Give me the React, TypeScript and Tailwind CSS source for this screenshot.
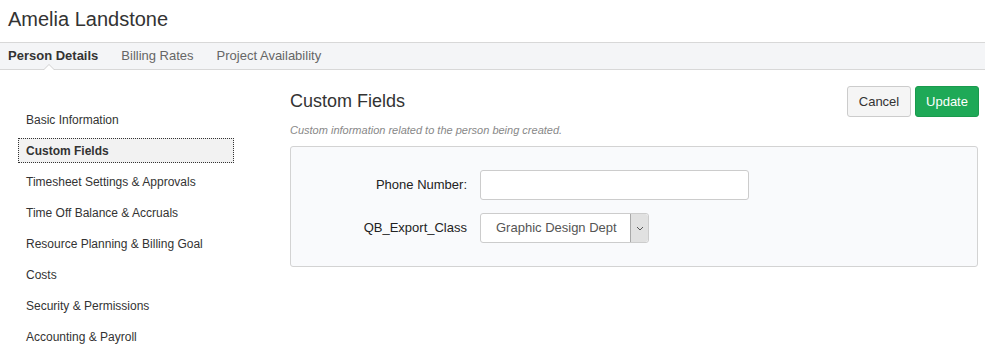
import React from "react";

const items = [
  "Basic Information",
  "Custom Fields",
  "Timesheet Settings & Approvals",
  "Time Off Balance & Accruals",
  "Resource Planning & Billing Goal",
  "Costs",
  "Security & Permissions",
  "Accounting & Payroll",
];

export default function App() {
  return (
    <div
      className="w-[985px] h-[360px] bg-white overflow-hidden text-[#333]"
      style={{ fontFamily: '"Liberation Sans", Arial, sans-serif' }}
    >
      <div className="h-[42px] flex items-center pl-[8px]">
        <h1 className="text-[20px] leading-none text-[#333] mt-[-4px]">Amelia Landstone</h1>
      </div>
      <div className="relative h-[28px] bg-[#f4f5f7] border-y border-[#d8d8d8] flex items-center pl-[8px] text-[13px]">
        <span className="font-bold text-[#333]">Person Details</span>
        <span className="ml-[23px] text-[#666]">Billing Rates</span>
        <span className="ml-[23px] text-[#666]">Project Availability</span>
        <div className="absolute left-[43px] bottom-[-1px] w-0 h-0 border-x-[6px] border-x-transparent border-b-[6px] border-b-[#d0d0d0]" />
        <div className="absolute left-[44px] bottom-[-1px] w-0 h-0 border-x-[5px] border-x-transparent border-b-[5px] border-b-white" />
      </div>
      <div className="flex">
        <div className="w-[290px] pl-[18px] pt-[37px] flex flex-col gap-[6px]">
          {items.map((it, i) => (
            <div
              key={it}
              className={
                i === 1
                  ? "w-[216px] h-[25px] flex items-center pl-[7px] text-[12px] font-bold bg-[#f2f2f2] border border-dotted border-[#333]"
                  : "w-[216px] h-[25px] flex items-center pl-[7px] text-[12px] text-[#333] border border-transparent"
              }
            >
              {it}
            </div>
          ))}
        </div>
        <div className="w-[688px] pt-[16px]">
          <div className="flex items-center justify-between h-[31px]">
            <h2 className="text-[18px] text-[#333]">Custom Fields</h2>
            <div className="flex gap-[4px] mr-[-1px]">
              <button className="w-[64px] h-[31px] rounded-[3px] border border-[#cccccc] bg-[#f5f5f5] text-[13px] text-[#333]">
                Cancel
              </button>
              <button className="w-[64px] h-[31px] rounded-[3px] border border-[#1a9a4d] bg-[#1ea957] text-[13px] text-white">
                Update
              </button>
            </div>
          </div>
          <div className="mt-[7px] text-[11px] italic text-[#888] leading-[13px]">
            Custom information related to the person being created.
          </div>
          <div className="mt-[9px] h-[121px] bg-[#f9fafc] border border-[#d3d3d3] rounded-[3px] pt-[23px]">
            <div className="flex items-center h-[30px]">
              <div className="w-[176px] text-right text-[13px] text-[#222]">Phone Number:</div>
              <div className="ml-[13px] w-[269px] h-[30px] bg-white border border-[#cccccc] rounded-[3px]" />
            </div>
            <div className="flex items-center h-[30px] mt-[13px]">
              <div className="w-[176px] text-right text-[13px] text-[#222]">QB_Export_Class</div>
              <div className="ml-[13px] w-[169px] h-[30px] bg-white border border-[#cccccc] rounded-[3px] flex">
                <div className="flex-1 flex items-center pl-[15px] text-[13px] text-[#555]">Graphic Design Dept</div>
                <div className="w-[18px] bg-[#e1e1e1] border-l border-[#a9a9a9] rounded-r-[3px] flex items-center justify-center">
                  <svg width="8" height="5" viewBox="0 0 8 5">
                    <path d="M1 1l3 3 3-3" fill="none" stroke="#555" strokeWidth="1" />
                  </svg>
                </div>
              </div>
            </div>
          </div>
        </div>
      </div>
    </div>
  );
}
